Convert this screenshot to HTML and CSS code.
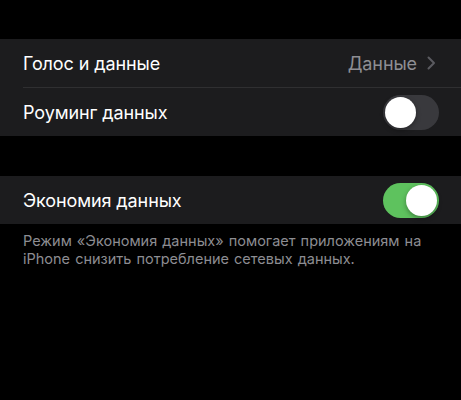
FILE: index.html
```html
<!DOCTYPE html>
<html lang="ru">
<head>
<meta charset="utf-8">
<link rel="stylesheet" href="styles.css">
</head>
<body>
<div class="screen">
  <section class="group group-first">
    <div class="row">
      <span class="label">Голос и данные</span>
      <span class="detail">Данные
        <svg class="chevron" viewBox="0 0 9 14" width="9" height="14"><path d="M1.5 1.5 L7 7 L1.5 12.5" fill="none" stroke="currentColor" stroke-width="2" stroke-linecap="round" stroke-linejoin="round"/></svg>
      </span>
    </div>
    <div class="sep"></div>
    <div class="row">
      <span class="label">Роуминг данных</span>
      <span class="switch"><span class="knob"></span></span>
    </div>
  </section>

  <section class="group group-second">
    <div class="row">
      <span class="label">Экономия данных</span>
      <span class="switch on"><span class="knob"></span></span>
    </div>
  </section>
  <p class="footer">Режим «Экономия данных» помогает приложениям на iPhone снизить потребление сетевых данных.</p>
</div>
</body>
</html>
```
FILE: styles.css
```css
html, body {
  margin: 0;
  padding: 0;
  background: #000;
}
body {
  font-family: "Inter", "Liberation Sans", sans-serif;
  color: #fff;
  width: 461px;
  height: 400px;
  overflow: hidden;
}
.screen {
  padding-top: 39px;
}
.group {
  background: #1c1c1e;
}
.group-second {
  margin-top: 40px;
}
.row {
  height: 48px;
  display: flex;
  align-items: center;
  justify-content: space-between;
  padding: 0 22px 0 23px;
}
.label {
  font-size: 18px;
  letter-spacing: -0.1px;
}
.detail {
  display: flex;
  align-items: center;
  gap: 10px;
  font-size: 18px;
  color: #8e8e93;
  letter-spacing: -0.1px;
}
.chevron {
  color: #5b5b60;
  margin-right: 3px;
}
.sep {
  height: 1px;
  margin-left: 23px;
  background: #2f2f31;
}
.switch {
  width: 56px;
  height: 35px;
  border-radius: 18px;
  background: #39393d;
  display: flex;
  align-items: center;
  padding: 0 2px;
  box-sizing: border-box;
}
.switch .knob {
  width: 31px;
  height: 31px;
  border-radius: 50%;
  background: #fff;
  box-shadow: 0 2px 5px rgba(0, 0, 0, 0.35);
}
.switch.on {
  background: #5ec25e;
  justify-content: flex-end;
}
.footer {
  margin: 8px 0 0;
  padding: 0 30px 0 23px;
  font-size: 14.5px;
  line-height: 18px;
  word-spacing: 1px;
  color: #8d8d92;
}
```
